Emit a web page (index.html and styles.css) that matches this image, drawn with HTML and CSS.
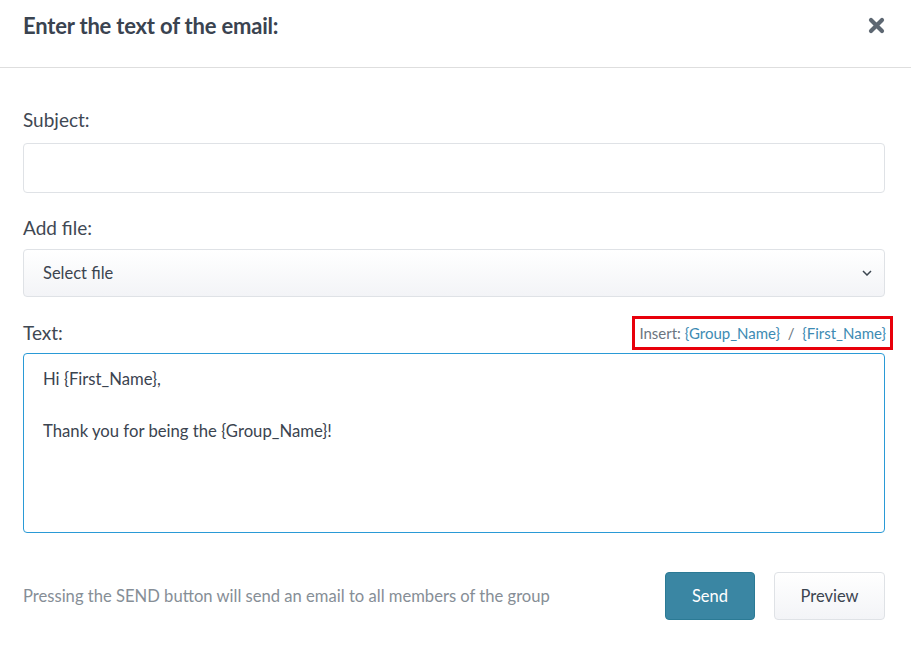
FILE: index.html
```html
<!DOCTYPE html>
<html>
<head>
<meta charset="utf-8">
<link rel="stylesheet" href="styles.css">
</head>
<body>
<div class="modal">
  <div class="modal-header">
    <h2 class="title">Enter the text of the email:</h2>
    <span class="close">
      <svg width="17" height="17" viewBox="0 0 17 17"><path d="M3 3 L14 14 M14 3 L3 14" stroke="#5d6772" stroke-width="4.2" stroke-linecap="round"/></svg>
    </span>
  </div>
  <div class="modal-body">
    <div class="label label-first">Subject:</div>
    <div class="input"></div>
    <div class="label label-file">Add file:</div>
    <div class="select">
      <span>Select file</span>
      <svg class="chevron" width="10" height="6" viewBox="0 0 10 6"><path d="M1 1 L5 5 L9 1" fill="none" stroke="#3c4650" stroke-width="1.5"/></svg>
    </div>
    <div class="text-row">
      <span class="label">Text:</span>
      <span class="insert">Insert: <a>{Group_Name}</a>&nbsp; / &nbsp;<a>{First_Name}</a></span>
    </div>
    <div class="textarea">
      <p>Hi {First_Name},</p>
      <p class="gap">Thank you for being the {Group_Name}!</p>
    </div>
    <div class="footer">
      <span class="note">Pressing the SEND button will send an email to all members of the group</span>
      <div class="buttons">
        <button class="btn btn-send">Send</button>
        <button class="btn btn-preview">Preview</button>
      </div>
    </div>
  </div>
</div>
</body>
</html>
```

FILE: styles.css
```css
html, body {
  margin: 0;
  padding: 0;
  background: #fff;
}
body {
  font-family: "Lato", "Open Sans", sans-serif;
  color: #3b4450;
}
.modal {
  width: 911px;
}
.modal-header {
  height: 68px;
  box-sizing: border-box;
  border-bottom: 1px solid #dedede;
  display: flex;
  align-items: center;
  justify-content: space-between;
  padding: 0 26px 17px 23px;
}
.title {
  margin: 0;
  font-size: 22px;
  font-weight: 700;
  color: #3a4350;
  letter-spacing: -0.2px;
}
.close {
  display: flex;
  width: 17px;
  height: 17px;
}
.modal-body {
  padding: 0 26px 0 23px;
}
.label {
  font-size: 19px;
  line-height: 24px;
  color: #3f4853;
}
.label-first {
  margin-top: 40px;
  margin-bottom: 11px;
}
.label-file {
  margin-top: 23px;
  margin-bottom: 9px;
}
.input {
  height: 50px;
  box-sizing: border-box;
  border: 1px solid #dfe2e6;
  border-radius: 4px;
}
.select {
  height: 48px;
  box-sizing: border-box;
  border: 1px solid #dfe2e6;
  border-radius: 4px;
  background: linear-gradient(#ffffff, #f3f4f7);
  display: flex;
  align-items: center;
  justify-content: space-between;
  padding: 0 12px 0 19px;
  font-size: 16.5px;
  color: #3b4450;
}
.chevron {
  display: block;
}
.text-row {
  margin-top: 19px;
  height: 34px;
  display: flex;
  align-items: center;
  justify-content: space-between;
}
.insert {
  height: 34px;
  box-sizing: border-box;
  border: 3px solid #e8000b;
  margin-right: -8px;
  padding: 0 4px 0 4px;
  display: flex;
  align-items: center;
  font-size: 15px;
  color: #6b7580;
  white-space: pre;
}
.insert a {
  color: #3d8bb3;
}
.textarea {
  margin-top: 3px;
  height: 180px;
  box-sizing: border-box;
  border: 1px solid #2a9ad6;
  border-radius: 4px;
  padding: 15px 19px;
  font-size: 16.7px;
  line-height: 21px;
}
.textarea p {
  margin: 0;
}
.textarea .gap {
  margin-top: 31px;
}
.footer {
  margin-top: 39px;
  display: flex;
  align-items: center;
  justify-content: space-between;
}
.note {
  font-size: 16.6px;
  color: #868e96;
}
.buttons {
  display: flex;
  gap: 19px;
}
.btn {
  height: 48px;
  box-sizing: border-box;
  border-radius: 4px;
  font-family: inherit;
  font-size: 16.5px;
  padding: 0;
}
.btn-send {
  width: 90px;
  background: #3a86a3;
  border: 1px solid #2b7a95;
  color: #fff;
}
.btn-preview {
  width: 111px;
  background: linear-gradient(#ffffff, #f3f4f7);
  border: 1px solid #dfe2e6;
  color: #3b4450;
}
```
